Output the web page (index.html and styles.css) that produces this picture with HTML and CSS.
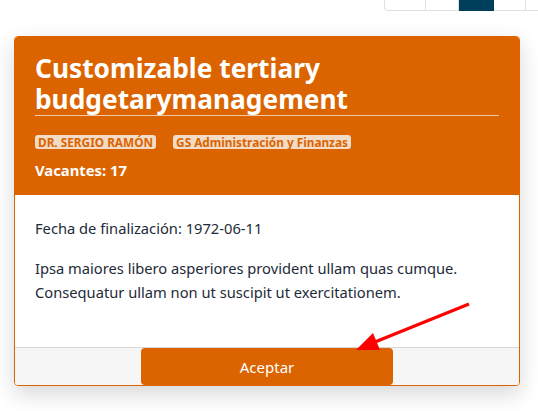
FILE: index.html
```html
<!DOCTYPE html>
<html lang="es">
<head>
<meta charset="utf-8">
<link rel="stylesheet" href="styles.css">
</head>
<body>
<nav class="pager">
  <span class="cell w41"></span>
  <span class="cell w33"></span>
  <span class="cell w35 active"></span>
  <span class="cell w32"></span>
  <span class="cell w32"></span>
</nav>
<div class="card">
  <div class="card-head">
    <h2 class="title">Customizable tertiary budgetarymanagement</h2>
    <div class="badges">
      <span class="badge upper">DR. SERGIO RAMÓN</span>
      <span class="badge">GS Administración y Finanzas</span>
    </div>
    <div class="vacantes">Vacantes: 17</div>
  </div>
  <div class="card-body">
    <p class="fecha">Fecha de finalización: 1972-06-11</p>
    <p class="desc">Ipsa maiores libero asperiores provident ullam quas cumque. Consequatur ullam non ut suscipit ut exercitationem.</p>
  </div>
  <div class="card-foot">
    <button class="btn">Aceptar</button>
  </div>
</div>
<svg class="arrow" width="538" height="411" viewBox="0 0 538 411">
  <line x1="469" y1="304" x2="370" y2="344" stroke="#ff0000" stroke-width="3.2"/>
  <polygon points="356,350 373,333 380,350" fill="#ff0000"/>
</svg>
</body>
</html>
```
FILE: styles.css
```css
html, body {
  margin: 0;
  padding: 0;
  background: #ffffff;
  overflow: hidden;
  width: 538px;
  height: 411px;
  font-family: "Noto Sans", "Open Sans", sans-serif;
}
.pager {
  display: flex;
  margin-left: 384px;
  width: 154px;
  height: 11px;
  overflow: hidden;
}
.cell {
  display: block;
  flex: none;
  height: 10px;
  border: 1px solid #dee2e6;
  border-top: none;
  border-left: none;
  box-sizing: content-box;
}
.cell:first-child {
  border-left: 1px solid #dee2e6;
  border-bottom-left-radius: 4px;
}
.w41 { width: 40px; }
.w33 { width: 32px; }
.w35 { width: 34px; }
.w32 { width: 31px; }
.cell.active {
  background: #003f5c;
  border-color: #003f5c;
}
.card {
  margin: 25px 0 0 14px;
  width: 506px;
  box-sizing: border-box;
  border: 1px solid #dc6400;
  border-radius: 4px;
  overflow: hidden;
  box-shadow: 0 8px 22px rgba(0,0,0,0.16);
}
.card-head {
  background: #dc6400;
  color: #ffffff;
  padding: 16px 20px 15px;
}
.title {
  margin: 0;
  font-size: 26.3px;
  line-height: 31px;
  font-weight: 700;
  border-bottom: 1px solid #f3c9a1;
}
.badges {
  display: flex;
  gap: 17px;
  margin-top: 19px;
}
.badge {
  background: #f2dcc7;
  color: #dc6400;
  font-size: 11.8px;
  font-weight: 700;
  line-height: 14px;
  padding: 0 3px;
  border-radius: 3px;
}
.vacantes {
  margin-top: 11px;
  font-size: 14.8px;
  font-weight: 700;
  line-height: 20px;
}
.card-body {
  background: #ffffff;
  padding: 21px 20px 43px;
  color: #1d2b38;
  font-size: 14.7px;
  line-height: 24px;
}
.card-body p {
  margin: 0;
}
.card-body .fecha {
  margin-bottom: 16px;
}
.card-foot {
  background: #f6f6f6;
  border-top: 1px solid #d6d6d6;
  display: flex;
  justify-content: center;
}
.btn {
  width: 252px;
  height: 37px;
  background: #dc6400;
  color: #ffffff;
  border: none;
  border-radius: 4px;
  font-family: "Noto Sans", "Open Sans", sans-serif;
  font-size: 15px;
  padding: 0;
}
.arrow {
  position: absolute;
  left: 0;
  top: 0;
  pointer-events: none;
}
```
